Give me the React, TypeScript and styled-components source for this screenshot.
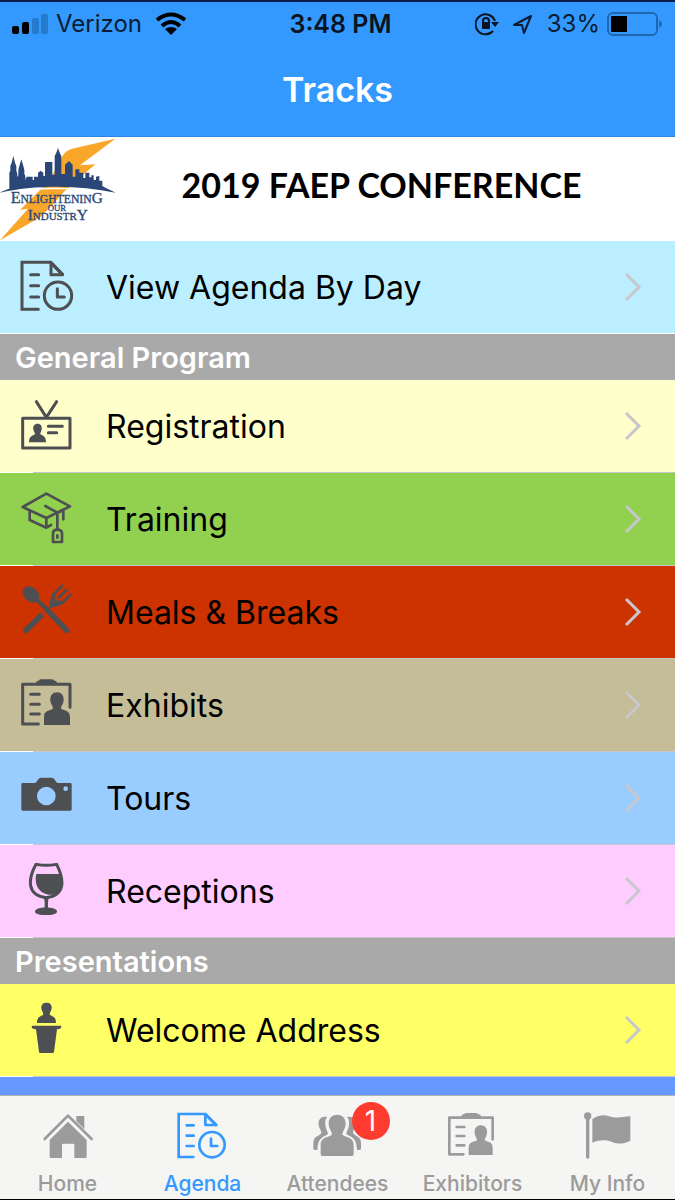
import React from "react";
import styled, { createGlobalStyle } from "styled-components";

const GlobalStyle = createGlobalStyle`
  * { box-sizing: border-box; }
  body {
    margin: 0;
    font-family: Inter, "Liberation Sans", sans-serif;
    color: #000;
    background: #fff;
  }
`;

const Screen = styled.div`
  display: flex;
  flex-direction: column;
  min-height: 100vh;
  border-top: 2px solid #0a1a4a;
  border-bottom: 1px solid #000;
`;

const Header = styled.header`
  background: #3399ff;
  border-bottom: 1px solid #2f86dd;
`;

const StatusBar = styled.div`
  display: grid;
  grid-template-columns: 1fr auto 1fr;
  align-items: center;
  height: 44px;
  padding: 0 12px;
  font-size: 24px;
  line-height: 30px;
  color: #0b1c33;
`;

const StatusGroup = styled.div<{ $end?: boolean }>`
  display: flex;
  align-items: center;
  justify-content: ${(p) => (p.$end ? "flex-end" : "flex-start")};
  gap: ${(p) => (p.$end ? "7px" : "8px")};
`;

const Clock = styled.time`
  padding-left: 6px;
  font-size: 25px;
  font-weight: 600;
  color: #0b1420;
`;

const Title = styled.h1`
  margin: 0;
  padding: 24px 0 26px;
  font-size: 34px;
  line-height: 40px;
  font-weight: 600;
  text-align: center;
  color: #fff;
`;

const Banner = styled.section`
  display: flex;
  align-items: center;
  height: 104px;
  background: #fff;
`;

const BannerTitle = styled.h2`
  flex: 1;
  margin: 0;
  padding: 0 42px 8px 0;
  font-family: Lato, "Open Sans", sans-serif;
  font-size: 34px;
  line-height: 44px;
  font-weight: 700;
  text-align: center;
  white-space: nowrap;
`;

const SectionHeader = styled.h3`
  margin: 0;
  padding: 0 15px;
  height: 46px;
  font-size: 29px;
  line-height: 47px;
  font-weight: 600;
  color: #fff;
  background: #a9a9a9;
`;

const List = styled.ul`
  list-style: none;
  margin: 0;
  padding: 0;
`;

const Row = styled.li<{ $color: string; $full?: boolean }>`
  height: 93px;
  background: ${(p) => p.$color};
  border-bottom: 1px solid;
  border-image: linear-gradient(
      to right,
      #fff 34px,
      ${(p) => (p.$full ? "#fff" : "#c8c7cc")} 34px
    )
    1;
`;

const RowLink = styled.a`
  display: flex;
  align-items: center;
  height: 100%;
  padding: 0 33px 0 18px;
  color: #000;
  text-decoration: none;
`;

const RowLabel = styled.span`
  flex: 1;
  padding: 2px 0 0 32px;
  font-size: 32px;
  line-height: 40px;
`;

const RowIcon = styled.svg`
  display: block;
  width: 56px;
  height: 56px;
  color: #4d4f52;
`;

const Chevron = styled.svg`
  display: block;
  width: 18px;
  height: 28px;
  fill: none;
  stroke: #c7c7cc;
  stroke-width: 3;
`;

const NextRow = styled.div`
  flex: 1;
  min-height: 18px;
  background: #6699ff;
`;

const TabBar = styled.nav`
  display: grid;
  grid-template-columns: repeat(5, 1fr);
  height: 104px;
  background: #f5f5f4;
  border-top: 1px solid #b2b2b6;
`;

const Tab = styled.button<{ $active?: boolean }>`
  display: flex;
  flex-direction: column;
  align-items: center;
  gap: 12px;
  padding: 14px 0 0;
  border: 0;
  background: none;
  font: 500 21px/24px Inter, "Liberation Sans", sans-serif;
  color: ${(p) => (p.$active ? "#3399ff" : "#9b9b9b")};
`;

const TabIconBox = styled.span`
  position: relative;
  display: block;
`;

const TabIcon = styled.svg`
  display: block;
  width: 56px;
  height: 50px;
`;

const Badge = styled.span`
  position: absolute;
  top: -8px;
  left: 42px;
  width: 38px;
  height: 38px;
  border-radius: 50%;
  background: #ff3b30;
  color: #fff;
  font-size: 28px;
  font-weight: 400;
  line-height: 38px;
  text-align: center;
`;

const line = {
  fill: "none",
  stroke: "currentColor",
  strokeLinecap: "round" as const,
  strokeLinejoin: "round" as const,
};

const AgendaArt = () => (
  <g {...line} strokeWidth="9">
    <path strokeLinejoin="miter" d="M115 208H66V67H152L187 103" />
    <path strokeLinejoin="round" d="M153 68V104H188Z" />
    <path d="M92 104H116M92 137H116M92 171H116" />
    <circle cx="174" cy="167" r="41" />
    <path d="M172 146V171H193" />
  </g>
);

const BadgeCardArt = () => (
  <g>
    <g {...line} strokeWidth="9">
      <rect x="68" y="115" width="142" height="89" />
      <path d="M109 65L139 112L170 65" />
      <path d="M145 139H187M145 158H170" />
    </g>
    <path
      fill="currentColor"
      d="M113 131C122 131 127 138 125 148C124 155 121 158 121 163C128 167 138 168 138 187H87C87 168 98 167 105 163C105 158 101 155 100 148C98 138 104 131 113 131Z"
    />
  </g>
);

const CapArt = () => (
  <g {...line} strokeWidth="8">
    <path d="M68 381L139 341L210 379L139 414Z" />
    <path d="M89 396V420L139 443V416M139 443L153 435" />
    <path d="M136 378L172 398V448M172 398L190 390V418" />
    <path d="M159 486V459Q160 449 172 449Q185 449 186 459V486Z" />
    <path d="M172 466V473" />
  </g>
);

const CutleryArt = () => (
  <g>
    <ellipse
      cx="93"
      cy="103"
      rx="28"
      ry="21"
      transform="rotate(42 93 103)"
      fill="currentColor"
    />
    <g {...line} strokeWidth="17">
      <path strokeWidth="12" d="M106 116L145 151" />
      <path d="M140 148L200 211" />
      <path strokeLinecap="butt" d="M127 163L82 207" />
      <path d="M88 201L78 211" />
    </g>
    <g {...line} strokeWidth="8">
      <path d="M186 77L161 103M199 90L177 113M212 104L187 129" />
    </g>
    <path
      fill="currentColor"
      d="M158 99L149 126Q148 132 149 144L164 141Q178 140 190 130L183 121Q172 125 167 119Q162 113 168 104Z"
    />
  </g>
);

const ExhibitArt = () => (
  <g>
    <g {...line} strokeWidth="9">
      <path d="M115 492H68V373H210V442" />
      <path d="M92 403H118M92 433H118M92 462H118" />
    </g>
    <path
      fill="currentColor"
      d="M109 375V365Q110 362 116 362Q118 358 125 358H154Q161 358 163 362Q169 362 170 365V375Z"
    />
    <path
      fill="currentColor"
      d="M171 397C184 397 192 406 191 421C190 433 183 438 183 446C196 453 210 451 210 471V495H132V471C132 451 147 453 159 446C159 438 152 433 151 421C150 406 158 397 171 397Z"
    />
  </g>
);

const CameraArt = () => (
  <path
    fill="currentColor"
    fillRule="evenodd"
    d="M68 114H105Q110 112 113 105Q117 98 124 98H154Q161 98 165 105Q168 112 173 114H211Q215 114 215 118V193Q215 197 211 197H68Q64 197 64 193V118Q64 114 68 114ZM139 125A28 28 0 1 0 139 181A28 28 0 1 0 139 125ZM197 124A7 7 0 1 0 197 138A7 7 0 1 0 197 124Z"
  />
);

const WineArt = () => (
  <g>
    <path
      {...line}
      strokeWidth="9"
      d="M108 358C128 362 150 362 170 358C181 380 189 400 185 422C181 444 162 455 139 458C116 455 96 444 92 422C88 400 96 380 108 358Z"
    />
    <path
      fill="currentColor"
      d="M109 387H184C190 409 188 430 171 445C159 453 137 450 124 440C109 428 104 408 109 387Z"
    />
    <path fill="currentColor" d="M129 454H149Q144 462 144 472V490H134V472Q134 462 129 454Z" />
    <path
      fill="currentColor"
      d="M137 487C155 489 171 491 171 500C171 507 155 510 138 510C121 510 105 507 105 500C105 491 121 489 137 487Z"
    />
  </g>
);

const PodiumArt = () => (
  <g fill="currentColor">
    <path d="M139 83C151 83 156 90 155 100C154 109 149 111 149 119C158 124 168 125 168 144H111C111 125 121 124 130 119C130 111 125 109 124 100C123 90 128 83 139 83Z" />
    <path d="M98 152H181Q184 152 184 156Q184 161 177 162L171 163L162 231Q162 234 157 234H122Q117 234 117 231L108 163L102 162Q95 161 95 156Q95 152 98 152Z" />
  </g>
);

const HomeArt = () => (
  <g>
    <path {...line} strokeWidth="8" d="M132 147L202 77L273 147" />
    <path fill="currentColor" d="M227 78H251V117L227 93Z" />
    <path
      fill="currentColor"
      d="M202 95L258 150V201Q258 204 255 204H221V165Q221 161 217 161H188Q184 161 184 165V204H150Q147 204 147 201V150Z"
    />
  </g>
);

const TabAgendaArt = () => (
  <g {...line} strokeWidth="8">
    <path strokeLinejoin="miter" d="M581 201H537V72H617L649 105" />
    <path strokeLinejoin="round" d="M617 73V105H650Z" />
    <path d="M561 106H582M561 137H582M561 168H582" />
    <circle cx="637" cy="164" r="38" />
    <path d="M634 146V168H653" />
  </g>
);

const bust =
  "M139 74C156 74 166 86 165 103C164 118 155 124 155 134C168 144 189 139 189 166V193Q189 198 184 198H95Q90 198 90 193V166C90 139 111 144 124 134C124 124 115 118 114 103C113 86 123 74 139 74Z";

const PeopleArt = () => (
  <g fill="currentColor">
    <path d="M110 81C92 77 82 88 84 104C85 116 92 119 92 129C84 140 68 138 68 160V178Q73 182 80 179C82 160 83 150 96 143L112 132C111 122 104 116 104 102C103 92 105 86 110 81Z" />
    <path d="M169 81C187 77 197 88 195 104C194 116 187 119 187 129C195 140 211 138 211 160V178Q206 182 199 179C197 160 196 150 183 143L167 132C168 122 175 116 175 102C176 92 174 86 169 81Z" />
    <path d={bust} stroke="#f5f5f4" strokeWidth="10" />
    <path d={bust} />
  </g>
);

const TabExhibitArt = () => (
  <g>
    <g {...line} strokeWidth="8">
      <path d="M386 193H344V83H474V148" />
      <path d="M366 111H389M366 138H389M366 166H389" />
    </g>
    <path
      fill="currentColor"
      d="M381 85V76Q382 73 388 73Q390 69 396 69H422Q429 69 431 73Q437 73 438 76V85Z"
    />
    <path
      fill="currentColor"
      d="M438 106C451 106 459 116 457 130C456 140 450 144 450 151C462 158 474 155 474 174V195H402V174C402 155 415 158 427 151C427 144 421 140 420 130C418 116 426 106 438 106Z"
    />
  </g>
);

const FlagArt = () => (
  <g fill="currentColor">
    <circle cx="759" cy="78" r="11" />
    <path {...line} strokeWidth="10" d="M759 82V201" />
    <path d="M773 87C787 78 804 72 821 78C845 86 862 81 887 79V152C868 162 850 163 834 157C812 148 794 150 773 158Z" />
  </g>
);

interface TrackItem {
  label: string;
  color: string;
  viewBox: string;
  Art: () => React.JSX.Element;
}

const agendaByDay: TrackItem = {
  label: "View Agenda By Day",
  color: "#bbeeff",
  viewBox: "54 57 168 168",
  Art: AgendaArt,
};

const program: TrackItem[] = [
  { label: "Registration", color: "#ffffcc", viewBox: "54 54 168 168", Art: BadgeCardArt },
  { label: "Training", color: "#92d050", viewBox: "54 333 168 168", Art: CapArt },
  { label: "Meals & Breaks", color: "#cc3300", viewBox: "54 72 168 168", Art: CutleryArt },
  { label: "Exhibits", color: "#c4bd97", viewBox: "54 351 168 168", Art: ExhibitArt },
  { label: "Tours", color: "#99ccff", viewBox: "54 75 168 168", Art: CameraArt },
  { label: "Receptions", color: "#ffccff", viewBox: "54 354 168 168", Art: WineArt },
];

const presentations: TrackItem[] = [
  { label: "Welcome Address", color: "#ffff66", viewBox: "54 81 168 168", Art: PodiumArt },
];

const tabs = [
  { label: "Home", viewBox: "118 60 168 150", Art: HomeArt },
  { label: "Agenda", viewBox: "526 60 168 150", Art: TabAgendaArt, active: true },
  { label: "Attendees", viewBox: "58 60 168 150", Art: PeopleArt, count: 1 },
  { label: "Exhibitors", viewBox: "331 60 168 150", Art: TabExhibitArt },
  { label: "My Info", viewBox: "736 60 168 150", Art: FlagArt },
];

const Track = ({ item, full }: { item: TrackItem; full?: boolean }) => (
  <Row $color={item.color} $full={full}>
    <RowLink href="#">
      <RowIcon viewBox={item.viewBox} aria-hidden="true">
        <item.Art />
      </RowIcon>
      <RowLabel>{item.label}</RowLabel>
      <Chevron viewBox="0 0 18 28" aria-hidden="true">
        <path d="M2 1L15 14L2 27" />
      </Chevron>
    </RowLink>
  </Row>
);

const Logo = () => (
  <svg width="130" height="104" viewBox="0 21 390 312" role="img" aria-label="Enlightening Our Industry">
    <path
      fill="#f9a72b"
      d="M346 26L240 106L286 103L208 170L188 190L160 222L120 262L0 331L84 236L60 240L150 150L186 80Q196 62 216 56Z"
    />
    <path
      fill="#fff"
      d="M0 191C50 178 112 173 172 173C230 173 290 179 347 191L300 188C250 180 210 178 172 178C130 178 60 182 0 191Z"
    />
    <path
      fill="#2b4778"
      d="M0 188C14 180 24 178 28 176V128L31 122V108L35 98L40 78L45 98L49 108V122L52 132V142L55 136V120L58 108L64 88L70 108L73 120V132L76 138V150L80 140H98V150H102V140H114V128L122 122L130 128V138H135V96H157V134H164V78L169 68L174 54L179 68L184 78V132H195V104L207 93L218 104V140H226V118H238V128H250V144H256V128H268V142H274V136H281V150H288V140L298 138V152H307V168L318 174L347 188C290 176 230 170 172 170C112 170 50 176 0 188Z"
    />
    <g fill="#2b4778" stroke="#2b4778" strokeWidth="1" fontFamily="Liberation Serif, serif">
      <text x="32" y="220" fontSize="48">
        E<tspan fontSize="35">NLIGHTENIN</tspan>
        <tspan fontSize="46">G</tspan>
      </text>
      <text x="143" y="242" fontSize="26">OUR</text>
      <text x="83" y="271" fontSize="46">
        I<tspan fontSize="33">NDUSTR</tspan>
        <tspan fontSize="46">Y</tspan>
      </text>
    </g>
  </svg>
);

export default function App() {
  return (
    <Screen>
      <GlobalStyle />
      <Header>
        <StatusBar>
          <StatusGroup>
            <svg width="36" height="22" viewBox="0 0 36 22" aria-hidden="true">
              <rect x="0" y="13" width="7" height="8" rx="2" fill="#000" />
              <rect x="10" y="9" width="7" height="12" rx="2" fill="#000" />
              <rect x="20" y="5" width="7" height="16" rx="2" fill="#247bcb" />
              <rect x="29" y="1" width="7" height="20" rx="2" fill="#247bcb" />
            </svg>
            <span>Verizon</span>
            <svg width="38" height="24" viewBox="0 0 38 24" aria-hidden="true">
              <g fill="none" stroke="#000" strokeWidth="4">
                <path d="M7 8Q21 -3 35 8" />
                <path d="M12 14Q21 6 30 14" />
              </g>
              <path fill="#000" d="M15 17Q21 13 27 17L21 23Z" />
            </svg>
          </StatusGroup>
          <Clock>3:48 PM</Clock>
          <StatusGroup $end>
            <svg width="24" height="24" viewBox="0 0 24 24" aria-hidden="true">
              <g fill="none" stroke="#0b1420" strokeWidth="2">
                <path d="M18 19A10 10 0 1 1 20 9" />
                <path d="M8 11V9A3 3 0 0 1 14 9V11" />
              </g>
              <path fill="#0b1420" d="M7 10H15V17H7ZM16 10H24L20 15Z" />
            </svg>
            <svg width="34" height="24" viewBox="0 0 34 24" aria-hidden="true">
              <path
                d="M8 13L25 4L18 21L16 13Z"
                fill="none"
                stroke="#0b1c33"
                strokeWidth="2"
                strokeLinejoin="round"
              />
            </svg>
            <span>33%</span>
            <svg width="56" height="26" viewBox="0 0 56 26" aria-hidden="true">
              <rect x="1" y="2" width="49" height="22" rx="5" fill="none" stroke="#1f68ad" strokeWidth="2" />
              <rect x="4" y="5" width="16" height="16" rx="1" fill="#000" />
              <path d="M52 9Q58 13 52 17Z" fill="#1f68ad" />
            </svg>
          </StatusGroup>
        </StatusBar>
        <Title>Tracks</Title>
      </Header>
      <main>
        <Banner>
          <Logo />
          <BannerTitle>2019 FAEP CONFERENCE</BannerTitle>
        </Banner>
        <List>
          <Track item={agendaByDay} full />
        </List>
        <SectionHeader>General Program</SectionHeader>
        <List>
          {program.map((item) => (
            <Track key={item.label} item={item} />
          ))}
        </List>
        <SectionHeader>Presentations</SectionHeader>
        <List>
          {presentations.map((item) => (
            <Track key={item.label} item={item} />
          ))}
        </List>
      </main>
      <NextRow />
      <TabBar>
        {tabs.map(({ label, viewBox, Art, active, count }) => (
          <Tab key={label} type="button" $active={active} aria-current={active ? "page" : undefined}>
            <TabIconBox>
              <TabIcon viewBox={viewBox} aria-hidden="true">
                <Art />
              </TabIcon>
              {count && <Badge>{count}</Badge>}
            </TabIconBox>
            {label}
          </Tab>
        ))}
      </TabBar>
    </Screen>
  );
}
